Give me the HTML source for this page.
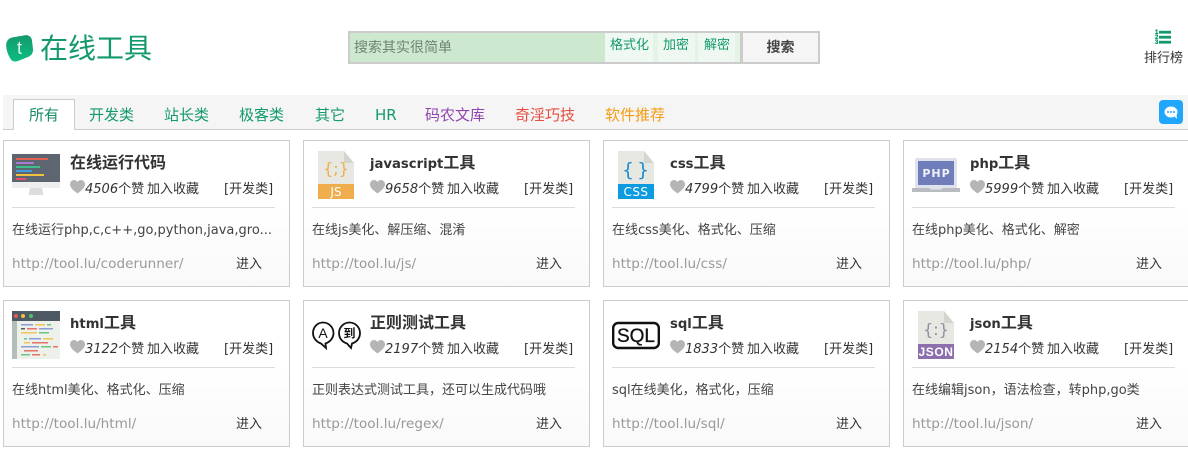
<!DOCTYPE html>
<html lang="zh"><head><meta charset="utf-8"><title>在线工具</title>
<style>
*{box-sizing:border-box;margin:0;padding:0}
html,body{width:1188px;height:455px;overflow:hidden;background:#fff}
body{position:relative;font-family:"DejaVu Sans","Noto Sans CJK SC",sans-serif;font-size:13px;color:#333}
.a{position:absolute;white-space:nowrap}
.card{position:absolute;width:287px;height:147px;border:1px solid #ccc;background:linear-gradient(#fff 45%,#f9f9f9)}
.card .a{line-height:18px}
.card svg.ic{position:absolute;left:8px;top:10px}
.t{left:66px;top:13px;font-size:16px;font-weight:bold;color:#333}
.t span{font-size:13.2px}
.h{left:66px;top:39px}
.n{left:81px;top:40px;font-size:13px;color:#333}
.n i{font-size:13px}
.f{left:143px;top:40px;font-size:13px}
.k{left:220px;top:40px;font-size:13px}
.l{position:absolute;left:8px;top:66px;width:263px;height:1px;background:#ddd}
.d{left:8px;top:81px;font-size:13px;color:#444}
.u{left:8px;top:114px;font-size:13.6px;color:#999}
.g{left:232px;top:115px;font-size:13px;color:#333}
.tab{position:absolute;top:105px;font-size:15px;line-height:20px;white-space:nowrap}
</style></head><body>
<svg width="0" height="0" style="position:absolute"><defs><path id="heart" d="M7.5 13.5C3 10 0 7.5 0 4.200 0 1.800 1.900 0 4 0c1.500 0 2.800.8 3.500 2C8.200.8 9.500 0 11 0c2.100 0 4 1.800 4 4.200 0 3.300-3 5.800-7.500 9.300z" fill="#b5b5b5"/></defs></svg>

<svg class="a" style="left:5px;top:34px" width="29" height="29" viewBox="0 0 29 29"><defs><linearGradient id="lg" x1="0" y1="0" x2="0" y2="1"><stop offset="0" stop-color="#149a6c"/><stop offset="1" stop-color="#0cbd82"/></linearGradient></defs><path d="M1.200 12C1 7.500 3 4.500 7 3.500L20 1.200C24 .8 26.500 3 27 6.500L28 15C28.300 19 26.500 21.500 23 23L13 27C9 28.300 6.500 27 5 24Q1.500 18 1.200 12Z" fill="url(#lg)"/><text x="14.500" y="20" font-size="18" fill="#d8f7ea" text-anchor="middle" font-family="Liberation Sans">t</text></svg>
<div class="a" style="left:40px;top:30px;font-size:28px;line-height:38px;color:#139a6c">在线工具</div>

<div class="a" style="left:348px;top:31px;width:394px;height:33px;background:#cce8cf;border:2px solid #ccc"></div>
<div class="a" style="left:354px;top:38px;font-size:14px;line-height:20px;color:#6f8473">搜索其实很简单</div>
<div class="a" style="left:605px;top:33px;width:135px;height:29px;background:#e3f3e6"></div>
<div class="a" style="left:605px;top:33px;width:48px;height:29px;background:#f0f8f2"></div>
<div class="a" style="left:658px;top:33px;width:37px;height:29px;background:#eef7f0"></div>
<div class="a" style="left:698px;top:33px;width:37px;height:29px;background:#eef7f0"></div>
<div class="a" style="left:610px;top:37px;font-size:13px;line-height:18px;color:#139a6c">格式化</div>
<div class="a" style="left:663px;top:37px;font-size:13px;line-height:18px;color:#139a6c">加密</div>
<div class="a" style="left:704px;top:37px;font-size:13px;line-height:18px;color:#139a6c">解密</div>
<div class="a" style="left:741px;top:31px;width:79px;height:33px;background:#f5f5f5;border:2px solid #ccc;text-align:center;font-size:14px;line-height:30px;font-weight:bold;color:#444">搜索</div>

<svg class="a" style="left:1154px;top:29px" width="18" height="17" viewBox="0 0 18 17"><g fill="#139a6c"><rect x="5" y="1.800" width="12" height="2.800"/><rect x="5" y="6.800" width="12" height="2.800"/><rect x="5" y="11.800" width="12" height="2.800"/></g><g fill="#139a6c" stroke="#139a6c" stroke-width=".3" font-size="6" font-weight="bold" font-family="Liberation Sans"><text x="1" y="5">1</text><text x="1" y="10">2</text><text x="1" y="15">3</text></g></svg>
<div class="a" style="left:1144px;top:50px;font-size:13px;line-height:18px;color:#333">排行榜</div>

<div class="a" style="left:3px;top:95px;width:1185px;height:35px;background:#f5f5f5;border-bottom:1px solid #ccc"></div>
<div class="a" style="left:13px;top:99px;width:62px;height:31px;background:#fff;border:1px solid #ccc;border-bottom:0"></div>
<div class="tab" style="left:29px;color:#1a8a66">所有</div>
<div class="tab" style="left:89px;color:#139a6c">开发类</div>
<div class="tab" style="left:164px;color:#139a6c">站长类</div>
<div class="tab" style="left:239px;color:#139a6c">极客类</div>
<div class="tab" style="left:315px;color:#139a6c">其它</div>
<div class="tab" style="left:375px;color:#139a6c">HR</div>
<div class="tab" style="left:425px;color:#8e44ad">码农文库</div>
<div class="tab" style="left:515px;color:#e74c3c">奇淫巧技</div>
<div class="tab" style="left:605px;color:#f39c12">软件推荐</div>
<svg class="a" style="left:1159px;top:100px" width="24" height="24" viewBox="0 0 24 24"><rect width="24" height="24" rx="4" fill="#1ea7fd"/><ellipse cx="12" cy="12" rx="6.500" ry="5.500" fill="#fff"/><path d="M15 16l3 3-.5-5z" fill="#fff"/><g fill="#1ea7fd"><circle cx="9" cy="12" r="1"/><circle cx="12" cy="12" r="1"/><circle cx="15" cy="12" r="1"/></g></svg>

<!-- Row 1 -->
<div class="card" style="left:3px;top:140px">
<svg class="ic" style="top:13px" width="48" height="42" viewBox="0 0 48 42"><rect width="48" height="28" fill="#5d6670"/><rect y="28" width="48" height="6" fill="#eee"/><path d="M18 34h12l1.500 7h-15z" fill="#ddd"/><rect x="4" y="4" width="32" height="2" fill="#e0624f"/><rect x="4" y="8" width="18" height="2" fill="#a97bd0"/><rect x="4" y="12" width="24" height="2" fill="#3cc08c"/><rect x="4" y="16" width="16" height="2" fill="#3e9bdc"/><rect x="4" y="20" width="28" height="2" fill="#f0c040"/><rect x="4" y="24" width="10" height="2" fill="#e0506a"/></svg>
<div class="a t">在线运行代码</div>
<svg class="a h" width="15" height="14" viewBox="0 0 15 14"><use href="#heart"/></svg>
<div class="a n"><i>4506</i>个赞</div><div class="a f">加入收藏</div><div class="a k">[开发类]</div><div class="l"></div>
<div class="a d">在线运行php,c,c++,go,python,java,gro...</div><div class="a u">http://tool.lu/coderunner/</div><div class="a g">进入</div>
</div>

<div class="card" style="left:303px;top:140px">
<svg class="ic" style="left:14px;top:10px" width="36" height="48" viewBox="0 0 36 48"><path d="M0 0h26l10 12v24H0z" fill="#e8e8e2"/><path d="M26 0l10 12H26z" fill="#d5d5cf"/><rect y="33" width="36" height="15" fill="#f0ad4e"/><text x="18" y="23" font-size="16" fill="#f0ad4e" text-anchor="middle" font-family="DejaVu Sans">{;}</text><text x="18" y="45" font-size="12" fill="#fff" text-anchor="middle" font-family="DejaVu Sans">JS</text></svg>
<div class="a t"><span>javascript</span>工具</div>
<svg class="a h" width="15" height="14" viewBox="0 0 15 14"><use href="#heart"/></svg>
<div class="a n"><i>9658</i>个赞</div><div class="a f">加入收藏</div><div class="a k">[开发类]</div><div class="l"></div>
<div class="a d">在线js美化、解压缩、混淆</div><div class="a u">http://tool.lu/js/</div><div class="a g">进入</div>
</div>

<div class="card" style="left:603px;top:140px">
<svg class="ic" style="left:14px;top:10px" width="36" height="48" viewBox="0 0 36 48"><path d="M0 0h26l10 12v24H0z" fill="#e8e8e2"/><path d="M26 0l10 12H26z" fill="#d5d5cf"/><rect y="33" width="36" height="15" fill="#0d9be0"/><text x="10" y="25" font-size="19" fill="#1d8fd0" text-anchor="middle" font-family="DejaVu Sans">{</text><text x="25" y="25" font-size="19" fill="#1d8fd0" text-anchor="middle" font-family="DejaVu Sans">}</text><text x="18" y="45" font-size="12" fill="#fff" text-anchor="middle" font-family="DejaVu Sans" letter-spacing=".5">CSS</text></svg>
<div class="a t"><span>css</span>工具</div>
<svg class="a h" width="15" height="14" viewBox="0 0 15 14"><use href="#heart"/></svg>
<div class="a n"><i>4799</i>个赞</div><div class="a f">加入收藏</div><div class="a k">[开发类]</div><div class="l"></div>
<div class="a d">在线css美化、格式化、压缩</div><div class="a u">http://tool.lu/css/</div><div class="a g">进入</div>
</div>

<div class="card" style="left:903px;top:140px">
<svg class="ic" width="48" height="46" viewBox="0 0 48 46"><rect x="3" y="7" width="42" height="30" rx="2" fill="#dfe2ea"/><rect x="6" y="10" width="36" height="24" fill="#6f7dbb"/><rect y="37" width="48" height="4" fill="#b9bcc0"/><rect x="18" y="37" width="12" height="1.500" fill="#dfe2ea"/><text x="24.500" y="26" font-size="11" font-weight="bold" letter-spacing="1" fill="#f0f2fa" text-anchor="middle" font-family="DejaVu Sans">PHP</text></svg>
<div class="a t"><span>php</span>工具</div>
<svg class="a h" width="15" height="14" viewBox="0 0 15 14"><use href="#heart"/></svg>
<div class="a n"><i>5999</i>个赞</div><div class="a f">加入收藏</div><div class="a k">[开发类]</div><div class="l"></div>
<div class="a d">在线php美化、格式化、解密</div><div class="a u">http://tool.lu/php/</div><div class="a g">进入</div>
</div>

<!-- Row 2 -->
<div class="card" style="left:3px;top:300px">
<svg class="ic" width="48" height="48" viewBox="0 0 48 48"><rect width="48" height="48" fill="#eef0ec"/><rect width="48" height="10" fill="#4d5a64"/><rect y="10" width="5" height="38" fill="#b5bdb8"/><circle cx="4" cy="5" r="2" fill="#e06050"/><circle cx="11" cy="5" r="2" fill="#f0c040"/><circle cx="19" cy="5" r="2" fill="#50c070"/><g opacity=".85"><rect x="9" y="13" width="12" height="1.500" fill="#7c8fd0"/><rect x="23" y="13" width="10" height="1.500" fill="#f0c040"/><rect x="35" y="13" width="4" height="1.500" fill="#50c070"/><rect x="9" y="17" width="4" height="1.500" fill="#444"/><rect x="15" y="17" width="10" height="1.500" fill="#e06050"/><rect x="27" y="17" width="14" height="1.500" fill="#7c8fd0"/><rect x="9" y="21" width="16" height="1.500" fill="#f0c040"/><rect x="27" y="21" width="10" height="1.500" fill="#50c070"/><rect x="12" y="27" width="3" height="1.500" fill="#50c070"/><rect x="17" y="27" width="12" height="1.500" fill="#7c8fd0"/><rect x="31" y="27" width="10" height="1.500" fill="#f0c040"/><rect x="12" y="31" width="6" height="1.500" fill="#f0c040"/><rect x="20" y="31" width="16" height="1.500" fill="#e06050"/><rect x="9" y="35" width="18" height="1.500" fill="#7c8fd0"/><rect x="29" y="35" width="10" height="1.500" fill="#50c070"/><rect x="41" y="35" width="5" height="1.500" fill="#e06050"/><rect x="12" y="39" width="14" height="1.500" fill="#e06050"/><rect x="9" y="43" width="9" height="1.500" fill="#50c070"/><rect x="20" y="43" width="8" height="1.500" fill="#e06050"/><rect x="31" y="43" width="3" height="1.500" fill="#f0c040"/></g></svg>
<div class="a t"><span>html</span>工具</div>
<svg class="a h" width="15" height="14" viewBox="0 0 15 14"><use href="#heart"/></svg>
<div class="a n"><i>3122</i>个赞</div><div class="a f">加入收藏</div><div class="a k">[开发类]</div><div class="l"></div>
<div class="a d">在线html美化、格式化、压缩</div><div class="a u">http://tool.lu/html/</div><div class="a g">进入</div>
</div>

<div class="card" style="left:303px;top:300px">
<svg class="ic" width="50" height="48" viewBox="0 0 50 48"><g fill="none" stroke="#111" stroke-width="1.800"><path d="M13.500 32.500C18 31 21.500 27 21.500 22 21.500 16 16.500 11.500 11 11.500S1 16 1 22C1 27 4.500 31 9 32.500L14 37z"/><path d="M35 32.500C30 31 27 27 27 22 27 16 32 11.500 37.500 11.500S48 16 48 22C48 27 45 31 40 32.500L39 37z"/></g><text x="11" y="27" font-size="14" fill="#111" text-anchor="middle" font-family="Liberation Sans">A</text><text x="37.500" y="26.500" font-size="12" font-weight="bold" fill="#111" text-anchor="middle" font-family="Noto Sans CJK SC">到</text></svg>
<div class="a t">正则测试工具</div>
<svg class="a h" width="15" height="14" viewBox="0 0 15 14"><use href="#heart"/></svg>
<div class="a n"><i>2197</i>个赞</div><div class="a f">加入收藏</div><div class="a k">[开发类]</div><div class="l"></div>
<div class="a d">正则表达式测试工具，还可以生成代码哦</div><div class="a u">http://tool.lu/regex/</div><div class="a g">进入</div>
</div>

<div class="card" style="left:603px;top:300px">
<svg class="ic" width="50" height="48" viewBox="0 0 50 48"><rect x="1.200" y="12" width="45.600" height="25" rx="5" fill="#fff" stroke="#111" stroke-width="2.400"/><text x="24" y="31" font-size="19" fill="#111" stroke="#111" stroke-width=".3" text-anchor="middle" font-family="Liberation Sans">SQL</text></svg>
<div class="a t"><span>sql</span>工具</div>
<svg class="a h" width="15" height="14" viewBox="0 0 15 14"><use href="#heart"/></svg>
<div class="a n"><i>1833</i>个赞</div><div class="a f">加入收藏</div><div class="a k">[开发类]</div><div class="l"></div>
<div class="a d">sql在线美化，格式化，压缩</div><div class="a u">http://tool.lu/sql/</div><div class="a g">进入</div>
</div>

<div class="card" style="left:903px;top:300px">
<svg class="ic" style="left:14px;top:10px" width="36" height="48" viewBox="0 0 36 48"><path d="M0 0h26l10 12v24H0z" fill="#e8e8e2"/><path d="M26 0l10 12H26z" fill="#d5d5cf"/><rect y="33" width="36" height="15" fill="#8e6fae"/><text x="18" y="24" font-size="16" fill="#8e8e9e" text-anchor="middle" font-family="DejaVu Sans">{:}</text><text x="18" y="45" font-size="12" font-weight="bold" fill="#fff" text-anchor="middle" font-family="Liberation Sans" letter-spacing=".6">JSON</text></svg>
<div class="a t"><span>json</span>工具</div>
<svg class="a h" width="15" height="14" viewBox="0 0 15 14"><use href="#heart"/></svg>
<div class="a n"><i>2154</i>个赞</div><div class="a f">加入收藏</div><div class="a k">[开发类]</div><div class="l"></div>
<div class="a d">在线编辑json，语法检查，转php,go类</div><div class="a u">http://tool.lu/json/</div><div class="a g">进入</div>
</div>
</body></html>
